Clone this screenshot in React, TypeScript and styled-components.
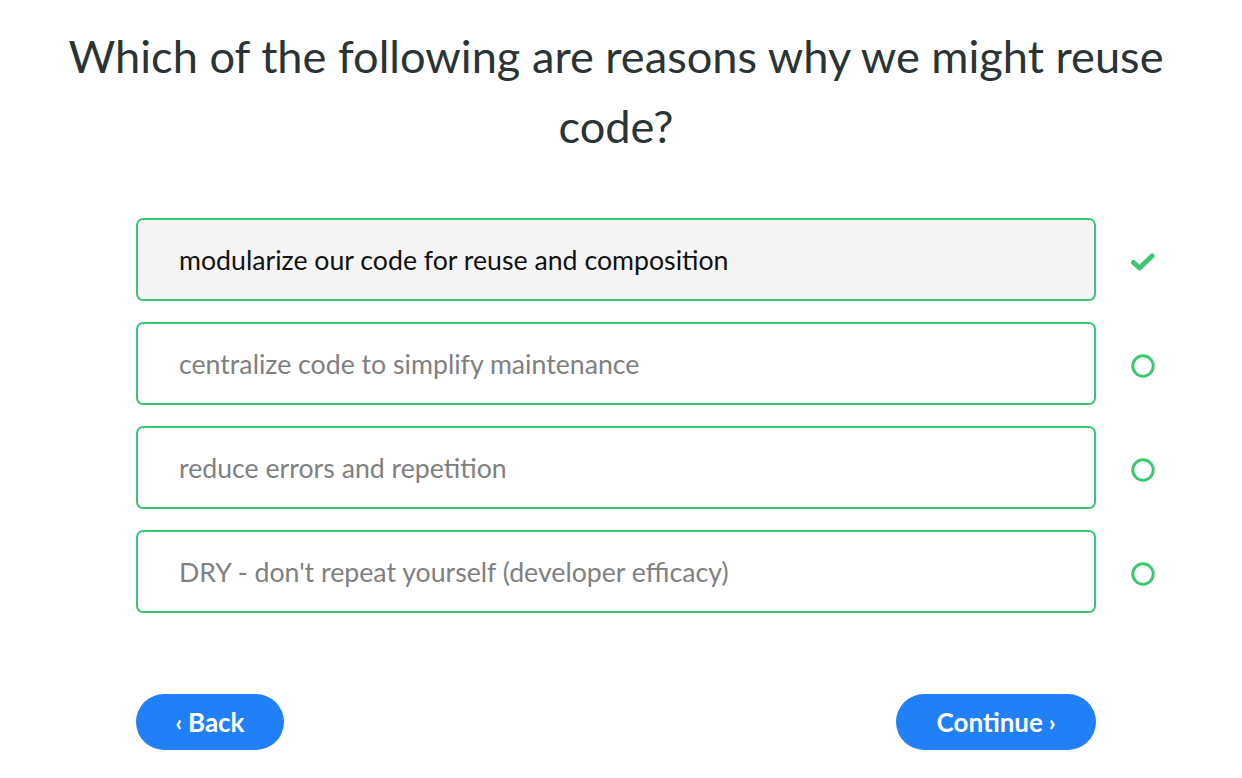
import React from "react";
import styled, { createGlobalStyle } from "styled-components";

const Global = createGlobalStyle`
  html, body { margin: 0; padding: 0; background: #ffffff; }
  body { font-family: "Lato", "Liberation Sans", sans-serif; }
`;

const Page = styled.div`
  width: 1242px;
  height: 778px;
  box-sizing: border-box;
  padding: 21px 52px 0 136px;
  display: flex;
  flex-direction: column;
`;

const Title = styled.h1`
  margin: 0 -80px 0 -80px;
  font-size: 45.2px;
  line-height: 70px;
  font-weight: 400;
  color: #2a3434;
  text-align: center;
  width: 1120px;
`;

const Options = styled.div`
  margin-top: 57px;
  display: flex;
  flex-direction: column;
  gap: 21px;
`;

const Row = styled.div`
  display: grid;
  grid-template-columns: 960px 1fr;
  align-items: center;
`;

const Choice = styled.div<{ $selected?: boolean }>`
  box-sizing: border-box;
  height: 83px;
  border: 2px solid #3cc872;
  border-radius: 7px;
  background: ${(p) => (p.$selected ? "#f5f5f5" : "#ffffff")};
  display: flex;
  align-items: center;
  padding-left: 41px;
  font-size: 26.7px;
  color: ${(p) => (p.$selected ? "#111111" : "#808080")};
`;

const Mark = styled.div`
  display: flex;
  justify-content: center;
  align-items: center;
  padding-top: 4px;
`;

const Footer = styled.div`
  margin-top: 81px;
  width: 960px;
  display: flex;
  justify-content: space-between;
`;

const Button = styled.button<{ $w: number }>`
  width: ${(p) => p.$w}px;
  height: 56px;
  border: none;
  border-radius: 28px;
  background: #2180f5;
  color: #ffffff;
  font-family: "Lato", "Liberation Sans", sans-serif;
  font-weight: 700;
  font-size: 26px;
  display: flex;
  align-items: center;
  justify-content: center;
  gap: 6px;
  cursor: pointer;
  padding: 0;
`;

const Chevron = styled.span`
  font-size: 22px;
  font-weight: 900;
`;

const Check = () => (
  <svg width="28" height="22" viewBox="0 0 28 22">
    <path d="M4.5 11.5 L10.5 17 L23 5" fill="none" stroke="#3cc872" strokeWidth="5" strokeLinecap="round" strokeLinejoin="round" />
  </svg>
);

const Circle = () => (
  <svg width="26" height="26" viewBox="0 0 26 26">
    <circle cx="13" cy="13" r="10.2" fill="none" stroke="#3cc872" strokeWidth="3" />
  </svg>
);

const items = [
  { text: "modularize our code for reuse and composition", selected: true },
  { text: "centralize code to simplify maintenance", selected: false },
  { text: "reduce errors and repetition", selected: false },
  { text: "DRY - don't repeat yourself (developer efficacy)", selected: false },
];

export default function App() {
  return (
    <>
      <Global />
      <Page>
        <Title>Which of the following are reasons why we might reuse code?</Title>
        <Options>
          {items.map((it) => (
            <Row key={it.text}>
              <Choice $selected={it.selected}>{it.text}</Choice>
              <Mark>{it.selected ? <Check /> : <Circle />}</Mark>
            </Row>
          ))}
        </Options>
        <Footer>
          <Button $w={148}>
            <Chevron>‹</Chevron>Back
          </Button>
          <Button $w={200}>
            Continue<Chevron>›</Chevron>
          </Button>
        </Footer>
      </Page>
    </>
  );
}
